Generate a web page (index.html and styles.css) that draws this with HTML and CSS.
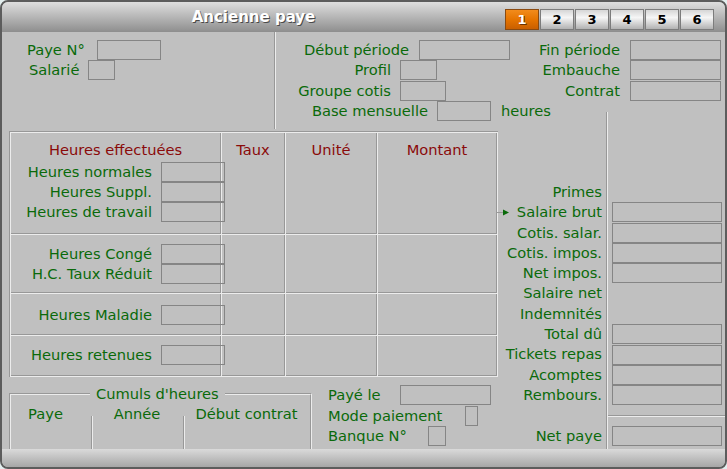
FILE: index.html
```html
<!DOCTYPE html>
<html lang="fr">
<head>
<meta charset="utf-8">
<title>Ancienne paye</title>
<link rel="stylesheet" href="styles.css">
</head>
<body>
<div class="window">
  <header class="titlebar">
    <h1 class="title">Ancienne paye</h1>
    <nav class="tabs">
      <span class="tab active">1</span>
      <span class="tab">2</span>
      <span class="tab">3</span>
      <span class="tab">4</span>
      <span class="tab">5</span>
      <span class="tab">6</span>
    </nav>
  </header>

  <main class="content">
    <section class="id-panel">
      <div class="row"><span class="lbl l-paye">Paye N°</span><input class="fld w64" type="text" tabindex="-1"></div>
      <div class="row"><span class="lbl l-sal">Salarié</span><input class="fld w27" type="text" tabindex="-1"></div>
    </section>

    <section class="period-panel">
      <div class="period-col col-a">
        <div class="row"><span class="lbl r w133">Début période</span><input class="fld w91" type="text" tabindex="-1"></div>
        <div class="row"><span class="lbl r w115">Profil</span><input class="fld w37" type="text" tabindex="-1"></div>
        <div class="row"><span class="lbl r w115">Groupe cotis</span><input class="fld w46" type="text" tabindex="-1"></div>
      </div>
      <div class="period-col col-b">
        <div class="row"><span class="lbl r w108">Fin période</span><input class="fld w91" type="text" tabindex="-1"></div>
        <div class="row"><span class="lbl r w108">Embauche</span><input class="fld w91" type="text" tabindex="-1"></div>
        <div class="row"><span class="lbl r w108">Contrat</span><input class="fld w91" type="text" tabindex="-1"></div>
      </div>
    </section>

    <section class="base-row">
      <div class="row"><span class="lbl r w152">Base mensuelle</span><input class="fld w54" type="text" tabindex="-1"><span class="unit">heures</span></div>
    </section>

    <div class="stub"></div>

    <section class="pay-table">
      <div class="cell c1 r1">
        <div class="c-head">Heures effectuées</div>
        <div class="hrow"><span class="hlbl">Heures normales</span><input class="fld w64" type="text" tabindex="-1"></div>
        <div class="hrow"><span class="hlbl">Heures Suppl.</span><input class="fld w64" type="text" tabindex="-1"></div>
        <div class="hrow"><span class="hlbl">Heures de travail</span><input class="fld w64" type="text" tabindex="-1"></div>
      </div>
      <div class="cell r1"><div class="c-head">Taux</div></div>
      <div class="cell r1"><div class="c-head">Unité</div></div>
      <div class="cell r1"><div class="c-head">Montant</div></div>

      <div class="cell c1 r2">
        <div class="hrow"><span class="hlbl">Heures Congé</span><input class="fld w64" type="text" tabindex="-1"></div>
        <div class="hrow"><span class="hlbl">H.C. Taux Réduit</span><input class="fld w64" type="text" tabindex="-1"></div>
      </div>
      <div class="cell"></div>
      <div class="cell"></div>
      <div class="cell"></div>

      <div class="cell c1 r3">
        <div class="hrow"><span class="hlbl">Heures Maladie</span><input class="fld w64" type="text" tabindex="-1"></div>
      </div>
      <div class="cell"></div>
      <div class="cell"></div>
      <div class="cell"></div>

      <div class="cell c1 r4">
        <div class="hrow"><span class="hlbl">Heures retenues</span><input class="fld w64" type="text" tabindex="-1"></div>
      </div>
      <div class="cell"></div>
      <div class="cell"></div>
      <div class="cell"></div>
    </section>

    <section class="bottom-left">
      <fieldset class="cumuls">
        <legend>Cumuls d'heures</legend>
        <div class="cumuls-cols">
          <div class="ccol first"><div class="ch">Paye</div><div class="cb"></div></div>
          <div class="ccol"><div class="ch">Année</div><div class="cb line"></div></div>
          <div class="ccol"><div class="ch">Début contrat</div><div class="cb line"></div></div>
        </div>
      </fieldset>
      <div class="payment">
        <div class="prow"><span class="lbl w72">Payé le</span><input class="fld w91" type="text" tabindex="-1"></div>
        <div class="prow"><span class="lbl w137">Mode paiement</span><input class="fld w13" type="text" tabindex="-1"></div>
        <div class="prow"><span class="lbl w100">Banque N°</span><input class="fld w18" type="text" tabindex="-1"></div>
      </div>
    </section>

    <section class="totals">
      <div class="t-labels">
        <div class="t-row">Primes</div>
        <div class="t-row arrow"><svg class="pointer" width="14" height="20" viewBox="0 0 14 20"><line x1="0" y1="10.5" x2="7" y2="10.5" stroke="#9a9a9a" stroke-width="1"/><polygon points="7,7.5 13,10.5 7,13.5" fill="#0a6a0a"/></svg><span>Salaire brut</span></div>
        <div class="t-row">Cotis. salar.</div>
        <div class="t-row">Cotis. impos.</div>
        <div class="t-row">Net impos.</div>
        <div class="t-row">Salaire net</div>
        <div class="t-row">Indemnités</div>
        <div class="t-row">Total dû</div>
        <div class="t-row">Tickets repas</div>
        <div class="t-row">Acomptes</div>
        <div class="t-row">Rembours.</div>
        <div class="t-row"></div>
        <div class="t-row">Net paye</div>
      </div>
      <div class="t-values">
        <div class="t-row"></div>
        <div class="t-row"><input class="fld w110" type="text" tabindex="-1"></div>
        <div class="t-row"><input class="fld w110" type="text" tabindex="-1"></div>
        <div class="t-row"><input class="fld w110" type="text" tabindex="-1"></div>
        <div class="t-row"><input class="fld w110" type="text" tabindex="-1"></div>
        <div class="t-row"></div>
        <div class="t-row"></div>
        <div class="t-row"><input class="fld w110" type="text" tabindex="-1"></div>
        <div class="t-row"><input class="fld w110" type="text" tabindex="-1"></div>
        <div class="t-row"><input class="fld w110" type="text" tabindex="-1"></div>
        <div class="t-row"><input class="fld w110" type="text" tabindex="-1"></div>
        <div class="t-row"><div class="t-rule"></div></div>
        <div class="t-row"><input class="fld w110" type="text" tabindex="-1"></div>
      </div>
    </section>
  </main>

  <footer class="statusbar"></footer>
</div>
</body>
</html>
```

FILE: styles.css
```css
* { box-sizing: border-box; }

html, body {
  margin: 0;
  padding: 0;
}

body {
  width: 727px;
  height: 469px;
  overflow: hidden;
  background: #e3eeee;
  font-family: "DejaVu Sans", Verdana, sans-serif;
  font-size: 14.67px;
  color: #0a6a0a;
}

.window {
  width: 727px;
  height: 469px;
  border: 2px solid #5c5c5c;
  border-radius: 8px;
  background: #c0c0c0;
  display: flex;
  flex-direction: column;
  overflow: hidden;
}

/* ---------- title bar ---------- */
.titlebar {
  flex: none;
  height: 30px;
  display: flex;
  align-items: flex-end;
  padding: 0 11px 2px 0;
  background: linear-gradient(#dedede, #8e8e8e);
}

.title {
  flex: 1;
  align-self: stretch;
  margin: 0;
  display: flex;
  align-items: center;
  justify-content: center;
  padding-top: 2px;
  font-size: 15px;
  font-weight: bold;
  color: #ffffff;
  text-shadow: 1px 1px 0 #4a4a4a;
}

.tabs {
  display: flex;
  gap: 1px;
}

.tab {
  width: 34px;
  height: 21px;
  display: flex;
  align-items: center;
  justify-content: center;
  border: 1px solid #7c7c7c;
  font-size: 13px;
  font-weight: bold;
  color: #000;
  background: linear-gradient(#d6d6d6 0%, #f6f6f6 40%, #d4d4d4 70%, #b2b2b2 100%);
}

.tab.active {
  color: #fff;
  text-shadow: 1px 1px 0 #6a3000;
  border-color: #8a4a10;
  background: linear-gradient(#f28c1c 0%, #e57400 50%, #c95f00 100%);
}

/* ---------- main grid ---------- */
.content {
  flex: 1;
  display: grid;
  grid-template-columns: 274px 220px 110px 1fr;
  grid-template-rows: 69px 28px 248px 1fr;
}

.row {
  display: flex;
  align-items: center;
  height: 20.3px;
  line-height: 20px;
  white-space: nowrap;
}

.lbl { flex: none; white-space: nowrap; }
.lbl.r { text-align: right; }

.fld {
  flex: none;
  appearance: none;
  -webkit-appearance: none;
  height: 20px;
  margin: 0;
  padding: 0;
  border: 1px solid #858585;
  border-radius: 0;
  background: transparent;
  font: inherit;
  outline: none;
}

.w13 { width: 13px; }
.w18 { width: 18px; }
.w27 { width: 27px; }
.w37 { width: 37px; }
.w46 { width: 46px; }
.w54 { width: 54px; }
.w64 { width: 64px; }
.w91 { width: 91px; }
.w110 { width: 110px; }

.w72 { width: 72px; }
.w100 { width: 100px; }
.w108 { width: 108px; margin-right: 10px; }
.w115 { width: 115px; margin-right: 9px; }
.w133 { width: 133px; margin-right: 10px; }
.w137 { width: 137px; }
.w152 { width: 152px; margin-right: 9px; }

/* identification panel */
.id-panel {
  grid-column: 1;
  grid-row: 1 / 3;
  padding-top: 8px;
  border-right: 2px groove #ececec;
}

.l-paye { margin-left: 25px; width: 70px; }
.l-sal { margin-left: 27px; width: 59px; }

/* period panel */
.period-panel {
  grid-column: 2 / 5;
  grid-row: 1;
  display: flex;
  padding-top: 8px;
}

.col-a { width: 236px; }

.base-row {
  grid-column: 2 / 4;
  grid-row: 2;
}

.unit { margin-left: 10px; }

.stub {
  grid-column: 4;
  grid-row: 2;
  margin-top: 11px;
  border-left: 2px groove #ececec;
}

/* ---------- hours table ---------- */
.pay-table {
  grid-column: 1 / 3;
  grid-row: 3;
  align-self: start;
  width: 489px;
  margin: 2px 0 0 7px;
  display: grid;
  grid-template-columns: 211px 64px 92px 120px;
  grid-template-rows: 102px 59px 42px 41px;
  border-top: 2px groove #ececec;
  border-left: 2px groove #ececec;
}

.cell {
  border-right: 2px groove #ececec;
  border-bottom: 2px groove #ececec;
}

.r1 { padding-top: 7px; }
.r2 { padding-top: 9px; }
.r3 { padding-top: 11px; }
.r4 { padding-top: 9px; }

.c-head {
  height: 20px;
  line-height: 20px;
  margin-bottom: 2px;
  text-align: center;
  color: #8a0a0a;
  white-space: nowrap;
}

.hrow {
  display: flex;
  align-items: center;
  height: 20px;
  line-height: 20px;
}

.hlbl {
  flex: none;
  width: 141px;
  margin-right: 9px;
  text-align: right;
  white-space: nowrap;
}

/* ---------- bottom left ---------- */
.bottom-left {
  grid-column: 1 / 3;
  grid-row: 4;
  display: flex;
  align-items: flex-start;
}

.cumuls {
  flex: none;
  width: 303px;
  height: 65px;
  margin: 7px 0 0 7px;
  padding: 0;
  min-width: 0;
  border: 2px groove #ececec;
  border-bottom: none;
  display: flex;
  flex-direction: column;
}

.cumuls legend {
  margin-left: 79px;
  padding: 0 6px;
  line-height: 20px;
  height: 20px;
  white-space: nowrap;
}

.cumuls-cols {
  flex: 1;
  display: grid;
  grid-template-columns: 80px 92px 1fr;
}

.ccol {
  display: flex;
  flex-direction: column;
}

.ch {
  height: 20px;
  line-height: 20px;
  margin-bottom: -8px;
  text-align: center;
  white-space: nowrap;
}

.ccol.first .ch { padding-right: 11px; }

.cb { flex: 1; }
.cb.line { border-left: 2px groove #ececec; }

.payment {
  margin-left: 16px;
  padding-top: 8px;
}

.prow {
  display: flex;
  align-items: center;
  height: 20.5px;
  line-height: 20px;
  white-space: nowrap;
}

/* ---------- totals ---------- */
.totals {
  grid-column: 3 / 5;
  grid-row: 3 / 5;
  display: flex;
}

.t-labels {
  flex: none;
  width: 110px;
  padding: 53px 4px 0 0;
  text-align: right;
}

.t-values {
  flex: 1;
  padding: 53px 0 0 4px;
  border-left: 2px groove #ececec;
}

.t-row {
  height: 20.3px;
  line-height: 20.3px;
  white-space: nowrap;
  display: flex;
  align-items: center;
  justify-content: flex-end;
}

.t-values .t-row { justify-content: flex-start; }

.t-row.arrow { justify-content: space-between; }

.pointer { flex: none; display: block; }

.t-rule {
  flex: 1;
  align-self: flex-start;
  margin: 10px 0 0 -4px;
  border-top: 2px groove #ececec;
}

/* ---------- status bar ---------- */
.statusbar {
  flex: none;
  height: 18px;
  background: linear-gradient(#dadada, #a6a6a6);
}
```
